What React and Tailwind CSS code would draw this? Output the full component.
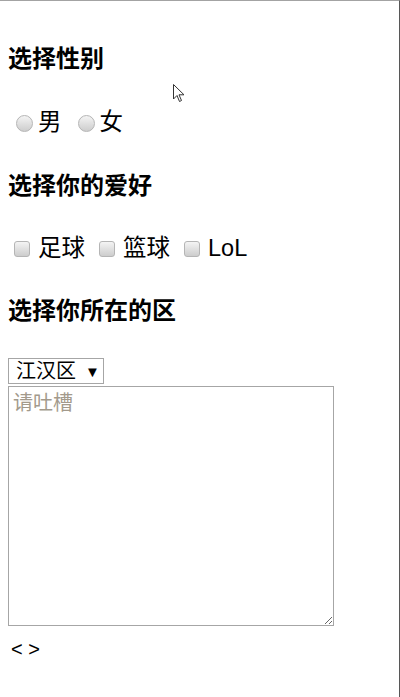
import { useState } from "react";

export default function App() {
    const [sex, setSex] = useState('');
    const [hobbies, setHobbies] = useState([]);
    const [area, setArea] = useState('江汉区');
    const [text, setText] = useState('');

    const toggleHobby = (h) => {
        setHobbies(hobbies.includes(h) ? hobbies.filter((x) => x !== h) : [...hobbies, h]);
    };

    return (
        <main
            className="relative w-[400px] h-[697px] bg-white border-t border-t-[#a3a3a3] border-r border-r-[#575757] pl-2 flex flex-col text-black"
            style={{ fontFamily: '"Liberation Sans", "Noto Sans CJK SC", sans-serif' }}
        >
            <h3 className="mt-[46px] h-6 leading-6 text-[24px] font-bold">选择性别</h3>

            <div className="mt-[37px] h-[30px] flex items-center text-[23.5px] gap-[16px] pl-2">
                {['男', '女'].map((s) => (
                    <label key={s} className="flex items-center cursor-pointer">
                        <span
                            onClick={() => setSex(s)}
                            className="mr-[5px] w-[17px] h-[17px] rounded-full border border-[#b5b5b5] bg-gradient-to-b from-[#f4f4f4] to-[#cdcdcd] flex items-center justify-center"
                        >
                            {sex === s && <span className="w-[7px] h-[7px] rounded-full bg-gray-700" />}
                        </span>
                        {s}
                    </label>
                ))}
            </div>

            <h3 className="mt-[36px] h-6 leading-6 text-[24px] font-bold">选择你的爱好</h3>

            <div className="mt-[36px] h-[30px] flex items-center text-[23.5px] gap-[14px] pl-[6px]">
                {['足球', '篮球', 'LoL'].map((h) => (
                    <label key={h} className="flex items-center cursor-pointer" onClick={() => toggleHobby(h)}>
                        <span className="mr-[8px] w-4 h-4 rounded-[3px] border border-[#b5b5b5] bg-gradient-to-b from-[#f4f4f4] to-[#cdcdcd] flex items-center justify-center text-[11px] leading-none">
                            {hobbies.includes(h) ? '✓' : ''}
                        </span>
                        {h}
                    </label>
                ))}
            </div>

            <h3 className="mt-[35px] h-6 leading-6 text-[24px] font-bold">选择你所在的区</h3>

            <div className="mt-[35px] w-[96px] h-[26px] border border-[#a6a6a6] flex items-center pl-[7px] text-[20px] leading-none relative">
                <span>{area}</span>
                <span className="ml-[9px] text-[15px]">▼</span>
                <select
                    value={area}
                    onChange={(e) => setArea(e.target.value)}
                    className="absolute inset-0 opacity-0 cursor-pointer"
                >
                    <option>江汉区</option>
                    <option>武昌区</option>
                    <option>洪山区</option>
                </select>
            </div>

            <textarea
                value={text}
                onChange={(e) => setText(e.target.value)}
                placeholder="请吐槽"
                className="mt-[2px] w-[326px] h-[240px] border border-[#a6a6a6] px-[4px] py-[2px] text-[20px] leading-[28px] placeholder:text-[#a39a8c] outline-none"
            />

            <div className="mt-[13px] ml-[3px] h-5 leading-5 text-[20px]">&lt; &gt;</div>

            <svg className="absolute left-[173px] top-[83px]" width="13" height="20" viewBox="0 0 13 20">
                <path d="M0.5 0.5 L0.5 15 L4 11.5 L6.5 17.5 L8.5 16.5 L6 10.8 L11 10.8 Z" fill="white" stroke="#333" strokeWidth="1" />
            </svg>
        </main>
    );
}
